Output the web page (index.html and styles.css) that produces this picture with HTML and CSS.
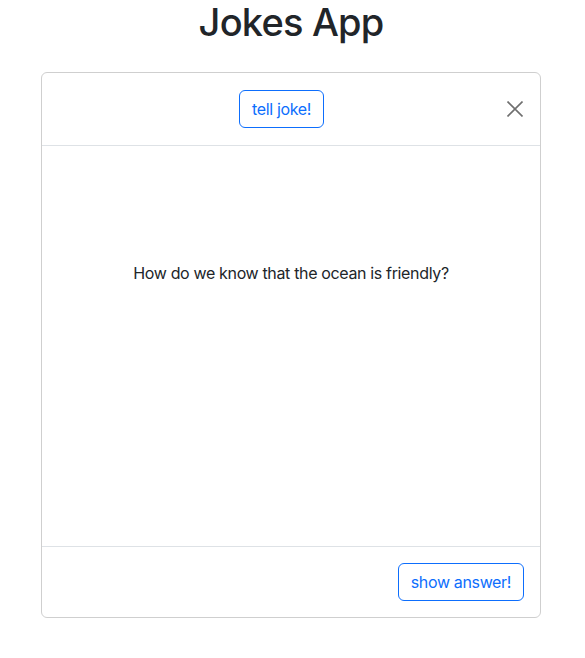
FILE: index.html
```html
<!DOCTYPE html>
<html lang="en">
<head>
<meta charset="utf-8">
<title>Jokes App</title>
<link rel="stylesheet" href="styles.css">
</head>
<body>
<main class="page">
  <h1 class="title">Jokes App</h1>
  <section class="card">
    <header class="card-header">
      <button class="btn btn-outline">tell joke!</button>
      <button class="btn-close" aria-label="Close">
        <svg width="16" height="16" viewBox="0 0 16 16"><path d="M0.5 0.5L15.5 15.5M15.5 0.5L0.5 15.5" stroke="#6f6f6f" stroke-width="1.6" fill="none"/></svg>
      </button>
    </header>
    <div class="card-body">
      <p class="joke">How do we know that the ocean is friendly?</p>
    </div>
    <footer class="card-footer">
      <button class="btn btn-outline">show answer!</button>
    </footer>
  </section>
</main>
</body>
</html>
```
FILE: styles.css
```css
* { box-sizing: border-box; }
html, body { margin: 0; padding: 0; background: #fff; }
body {
  font-family: Inter, "Noto Sans", "Liberation Sans", sans-serif;
  color: #212529;
  font-size: 16px;
  line-height: 1.5;
  letter-spacing: -0.35px;
}
.page {
  width: 500px;
  margin-left: 41px;
  display: flex;
  flex-direction: column;
  align-items: stretch;
}
.title {
  margin: 0 0 24px 0;
  height: 48px;
  font-size: 38px;
  line-height: 44px;
  padding-bottom: 4px;
  font-weight: 500;
  letter-spacing: -0.8px;
  text-align: center;
  color: #212529;
}
.card {
  border: 1px solid #cfcfcf;
  border-radius: 6px;
  display: flex;
  flex-direction: column;
}
.card-header {
  height: 73px;
  padding: 0 16px;
  border-bottom: 1px solid #dee2e6;
  display: flex;
  align-items: center;
}
.card-header .btn { margin: 0 auto; }
.btn-close {
  width: 20px;
  height: 20px;
  padding: 0;
  margin-right: -1px;
  border: 0;
  background: transparent;
  display: flex;
  align-items: center;
  justify-content: center;
  cursor: pointer;
}
.btn {
  font-family: inherit;
  font-size: 16px;
  line-height: 24px;
  letter-spacing: -0.35px;
  padding: 6px 12px;
  border-radius: 6px;
  background: #fff;
  cursor: pointer;
}
.btn-outline {
  color: #0d6efd;
  border: 1px solid #0d6efd;
}
.card-body {
  height: 401px;
  padding: 115px 16px 0;
  border-bottom: 1px solid #dee2e6;
}
.joke {
  margin: 0;
  text-align: center;
}
.card-footer {
  height: 70px;
  padding: 0 16px;
  display: flex;
  align-items: center;
  justify-content: flex-end;
}
```
